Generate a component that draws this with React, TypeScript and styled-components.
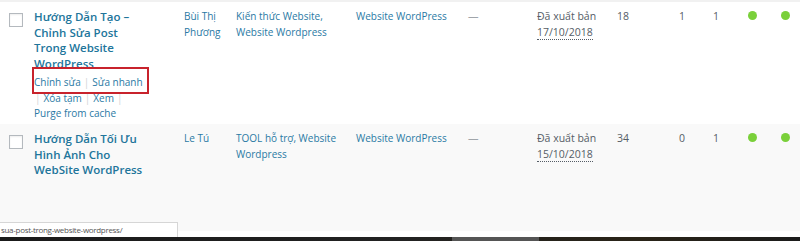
import styled, { createGlobalStyle } from "styled-components";

const GlobalStyle = createGlobalStyle`
  html, body {
    margin: 0;
    padding: 0;
    background: #ffffff;
  }
  body {
    font-family: "Open Sans", "Noto Sans", sans-serif;
    width: 800px;
    height: 241px;
    overflow: hidden;
  }
`;

const Page = styled.div`
  position: relative;
  width: 800px;
  height: 241px;
  display: flex;
  flex-direction: column;
  background: #ffffff;
`;

const TopEdge = styled.div`
  height: 2px;
  background: #f1f1f1;
`;

const Row = styled.div<{ $alt?: boolean; $h: number }>`
  display: grid;
  grid-template-columns: 34px 150px 52px 120px 112px 69px 80px 62px 34px 35px 33px 19px;
  height: ${({ $h }) => $h}px;
  box-sizing: border-box;
  padding-top: 7px;
  background: ${({ $alt }) => ($alt ? "#f9f9f9" : "#ffffff")};
  font-size: 10.5px;
  line-height: 15.5px;
  color: #555d66;
`;

const CheckCell = styled.div`
  padding: 4px 0 0 9px;
`;

const Checkbox = styled.span`
  display: block;
  width: 12px;
  height: 12px;
  border: 1px solid #b4b9be;
  background: #fff;
  box-shadow: inset 0 1px 2px rgba(0, 0, 0, 0.07);
`;

const Cell = styled.div`
  padding-right: 6px;
`;

const TitleLink = styled.a`
  display: block;
  color: #21759b;
  font-weight: 600;
  font-size: 11.5px;
  text-decoration: none;
`;

const Actions = styled.div`
  margin-top: 4px;
  font-size: 10px;
  color: #a0a5aa;
`;

const Highlight = styled.span`
  position: relative;
  &::after {
    content: "";
    position: absolute;
    left: -2px;
    right: -6px;
    top: -8px;
    bottom: -5px;
    border: 2px solid #c8232c;
  }
`;

const ActionLink = styled.a`
  color: #2a79a4;
  text-decoration: none;
`;

const Sep = styled.span<{ $first?: boolean }>`
  color: #d0d3d6;
  margin: ${({ $first }) => ($first ? "0 3px 0 1px" : "0 3px")};
`;

const Link = styled.a<{ $block?: boolean }>`
  display: ${({ $block }) => ($block ? "block" : "inline")};
  font-size: 10px;
  color: #2a79a4;
  text-decoration: none;
`;

const Dash = styled.span`
  color: #a0a5aa;
`;

const DateText = styled.abbr`
  text-decoration: none;
  border-bottom: 1px dotted #555d66;
`;

const Dot = styled.span`
  display: block;
  margin-top: 2px;
  width: 9px;
  height: 9px;
  border-radius: 50%;
  background: #7ad03a;
`;

const Fill = styled.div`
  flex: 1;
`;

const Taskbar = styled.div`
  height: 4px;
  display: flex;
  background: linear-gradient(90deg, #1a1a1a 0%, #222 50%, #2a2418 80%, #1c1c1c 100%);
`;

const TaskGap = styled.div<{ $w: number }>`
  width: ${({ $w }) => $w}px;
`;

const TaskItem = styled.div`
  width: 87px;
  background: #555;
`;

const StatusBubble = styled.div`
  position: absolute;
  left: 0;
  bottom: 4px;
  width: 178px;
  height: 15px;
  box-sizing: border-box;
  padding-left: 1px;
  background: #fff;
  border: 1px solid #d6d6d6;
  border-left: none;
  border-bottom: none;
  font-family: "Open Sans", "Noto Sans", sans-serif;
  font-size: 8px;
  letter-spacing: -0.3px;
  line-height: 13px;
  color: #555;
  white-space: nowrap;
  overflow: hidden;
`;

type Post = {
  title: string[];
  author: string[];
  cats: string[];
  tags: string;
  date: string;
  views: string;
  c1: string;
  c2: string;
  alt?: boolean;
  h: number;
  actions?: boolean;
};

const posts: Post[] = [
  {
    title: ["Hướng Dẫn Tạo –", "Chỉnh Sửa Post", "Trong Website", "WordPress"],
    author: ["Bùi Thị", "Phương"],
    cats: ["Kiến thức Website,", "Website Wordpress"],
    tags: "Website WordPress",
    date: "17/10/2018",
    views: "18",
    c1: "1",
    c2: "1",
    h: 122,
    actions: true,
  },
  {
    title: ["Hướng Dẫn Tối Ưu", "Hình Ảnh Cho", "WebSite WordPress"],
    author: ["Le Tú"],
    cats: ["TOOL hỗ trợ, Website", "Wordpress"],
    tags: "Website WordPress",
    date: "15/10/2018",
    views: "34",
    c1: "0",
    c2: "1",
    alt: true,
    h: 107,
  },
];

const App = () => {
  return (
    <Page>
      <GlobalStyle />
      <TopEdge />
      {posts.map((p) => (
        <Row key={p.date} $alt={p.alt} $h={p.h}>
          <CheckCell>
            <Checkbox />
          </CheckCell>
          <Cell>
            <TitleLink>
              {p.title.map((t) => (
                <div key={t}>{t}</div>
              ))}
            </TitleLink>
            {p.actions && (
              <Actions>
                <Highlight>
                  <ActionLink>Chỉnh sửa</ActionLink>
                  <Sep>|</Sep>
                  <ActionLink>Sửa nhanh</ActionLink>
                </Highlight>
                <br />
                <Sep $first>|</Sep>
                <ActionLink>Xóa tạm</ActionLink>
                <Sep>|</Sep>
                <ActionLink>Xem</ActionLink>
                <Sep>|</Sep>
                <br />
                <ActionLink>Purge from cache</ActionLink>
              </Actions>
            )}
          </Cell>
          <Cell>
            {p.author.map((a) => (
              <Link key={a} $block>
                {a}
              </Link>
            ))}
          </Cell>
          <Cell>
            {p.cats.map((c) => (
              <Link key={c} $block>
                {c}
              </Link>
            ))}
          </Cell>
          <Cell>
            <Link>{p.tags}</Link>
          </Cell>
          <Cell>
            <Dash>—</Dash>
          </Cell>
          <Cell>
            Đã xuất bản
            <br />
            <DateText>{p.date}</DateText>
          </Cell>
          <Cell>{p.views}</Cell>
          <Cell>{p.c1}</Cell>
          <Cell>{p.c2}</Cell>
          <Cell>
            <Dot />
          </Cell>
          <Cell>
            <Dot />
          </Cell>
        </Row>
      ))}
      <Fill />
      <Taskbar>
        <TaskGap $w={452} />
        <TaskItem />
      </Taskbar>
      <StatusBubble>sua-post-trong-website-wordpress/</StatusBubble>
    </Page>
  );
};

export default App;
